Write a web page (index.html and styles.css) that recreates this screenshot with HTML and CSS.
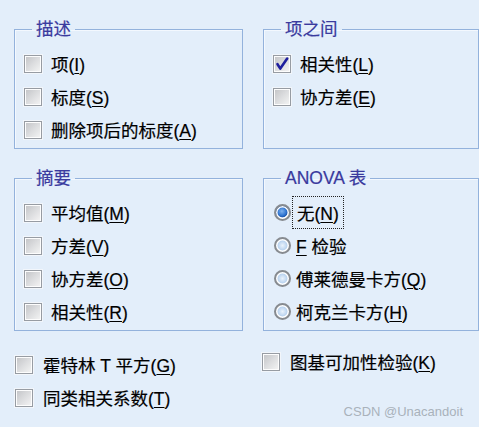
FILE: index.html
```html
<!DOCTYPE html>
<html lang="zh-CN">
<head>
    <meta charset="UTF-8">
    <title>统计</title>
    <link rel="stylesheet" href="styles.css">
</head>
<body>
    <div class="dialog">
        <div class="groups">
            <fieldset class="group">
                <legend>描述</legend>
                <label class="option"><span class="check"></span><span class="text">项(<u>I</u>)</span></label>
                <label class="option"><span class="check"></span><span class="text">标度(<u>S</u>)</span></label>
                <label class="option"><span class="check"></span><span class="text">删除项后的标度(<u>A</u>)</span></label>
            </fieldset>

            <fieldset class="group">
                <legend>项之间</legend>
                <label class="option"><span class="check checked">
                    <svg viewBox="0 0 16 16" width="16" height="16"><path d="M3.5 8.2 L6.3 12.6 L13.2 2.6" fill="none" stroke="#1f1f9e" stroke-width="2.6" stroke-linecap="round" stroke-linejoin="round"/></svg>
                </span><span class="text">相关性(<u>L</u>)</span></label>
                <label class="option"><span class="check"></span><span class="text">协方差(<u>E</u>)</span></label>
            </fieldset>

            <fieldset class="group">
                <legend>摘要</legend>
                <label class="option"><span class="check"></span><span class="text">平均值(<u>M</u>)</span></label>
                <label class="option"><span class="check"></span><span class="text">方差(<u>V</u>)</span></label>
                <label class="option"><span class="check"></span><span class="text">协方差(<u>O</u>)</span></label>
                <label class="option"><span class="check"></span><span class="text">相关性(<u>R</u>)</span></label>
            </fieldset>

            <fieldset class="group">
                <legend>ANOVA 表</legend>
                <label class="option"><span class="radio selected"></span><span class="text focus">无(<u>N</u>)</span></label>
                <label class="option"><span class="radio"></span><span class="text"><u>F</u> 检验</span></label>
                <label class="option"><span class="radio"></span><span class="text">傅莱德曼卡方(<u>Q</u>)</span></label>
                <label class="option"><span class="radio"></span><span class="text">柯克兰卡方(<u>H</u>)</span></label>
            </fieldset>
        </div>

        <div class="extras">
            <div class="extras-col">
                <label class="option"><span class="check"></span><span class="text">霍特林 T 平方(<u>G</u>)</span></label>
                <label class="option"><span class="check"></span><span class="text">同类相关系数(<u>T</u>)</span></label>
            </div>
            <div class="extras-col raised">
                <label class="option"><span class="check"></span><span class="text">图基可加性检验(<u>K</u>)</span></label>
            </div>
        </div>
    </div>

    <div class="watermark">CSDN @Unacandoit</div>
</body>
</html>
```

FILE: styles.css
```css
body {
    margin: 0;
    background-color: #e3eefa;
    font-family: "Liberation Sans", "Noto Sans CJK SC", sans-serif;
    font-size: 17.5px;
    color: #000;
    -webkit-text-stroke: 0.2px currentColor;
    height: 427px;
    position: relative;
    overflow: hidden;
}
.dialog {
    padding: 19px 1px 0 14px;
}
.groups {
    display: grid;
    grid-template-columns: 229px 216px;
    column-gap: 20px;
    row-gap: 19px;
}
.group {
    margin: 0;
    padding: 8px 0 2px 9px;
    min-width: 0;
    border: 1px solid #93b2dc;
    box-shadow: inset 1px 1px 0 #f3f8fe;
}
.group legend {
    padding: 0 4px;
    margin-left: 8px;
    height: 20px;
    line-height: 20px;
    color: #3a3a9e;
}
.option {
    display: flex;
    align-items: center;
    height: 33px;
}
.option .text {
    margin-left: 9px;
    white-space: nowrap;
}
.option u {
    text-underline-offset: 2px;
    text-decoration-thickness: 1px;
}
.check {
    box-sizing: border-box;
    width: 18px;
    height: 18px;
    border: 1px solid #979ca3;
    box-shadow: inset 0 0 0 1px #fdfdfd, 0 0 0 1px #f2f6fb;
    background: linear-gradient(135deg, #c2c3c6 0%, #dcdddf 50%, #f5f5f5 100%);
    display: flex;
    align-items: center;
    justify-content: center;
    flex-shrink: 0;
}
.check svg {
    display: block;
}
.radio {
    box-sizing: border-box;
    width: 17px;
    height: 17px;
    margin: 0 0 0 1px;
    border-radius: 50%;
    border: 2px solid #878b90;
    box-shadow: inset 0 0 0 1.5px #ffffff;
    background: radial-gradient(circle at 50% 50%, #eaf3fc 0, #b5d0ee 55%, #ffffff 72%);
    flex-shrink: 0;
}
.radio.selected {
    background: radial-gradient(circle at 45% 40%, #7fb2ee 0, #2f74d0 42%, #1d56ae 56%, #ffffff 70%);
}
.radio + .text {
    margin-left: 5px;
}
.focus {
    outline: 1px dotted #222;
    outline-offset: 3px;
    padding: 0 1px;
}
.extras {
    display: grid;
    grid-template-columns: 229px 216px;
    column-gap: 18px;
    padding: 17px 0 0 1px;
}
.extras .text {
    margin-left: 10px;
}
.raised {
    margin-top: -3px;
}
.watermark {
    position: absolute;
    right: 16px;
    bottom: 8px;
    font-family: "Liberation Sans", sans-serif;
    font-size: 13px;
    color: #a9b2bb;
    -webkit-text-stroke: 0;
}
```
